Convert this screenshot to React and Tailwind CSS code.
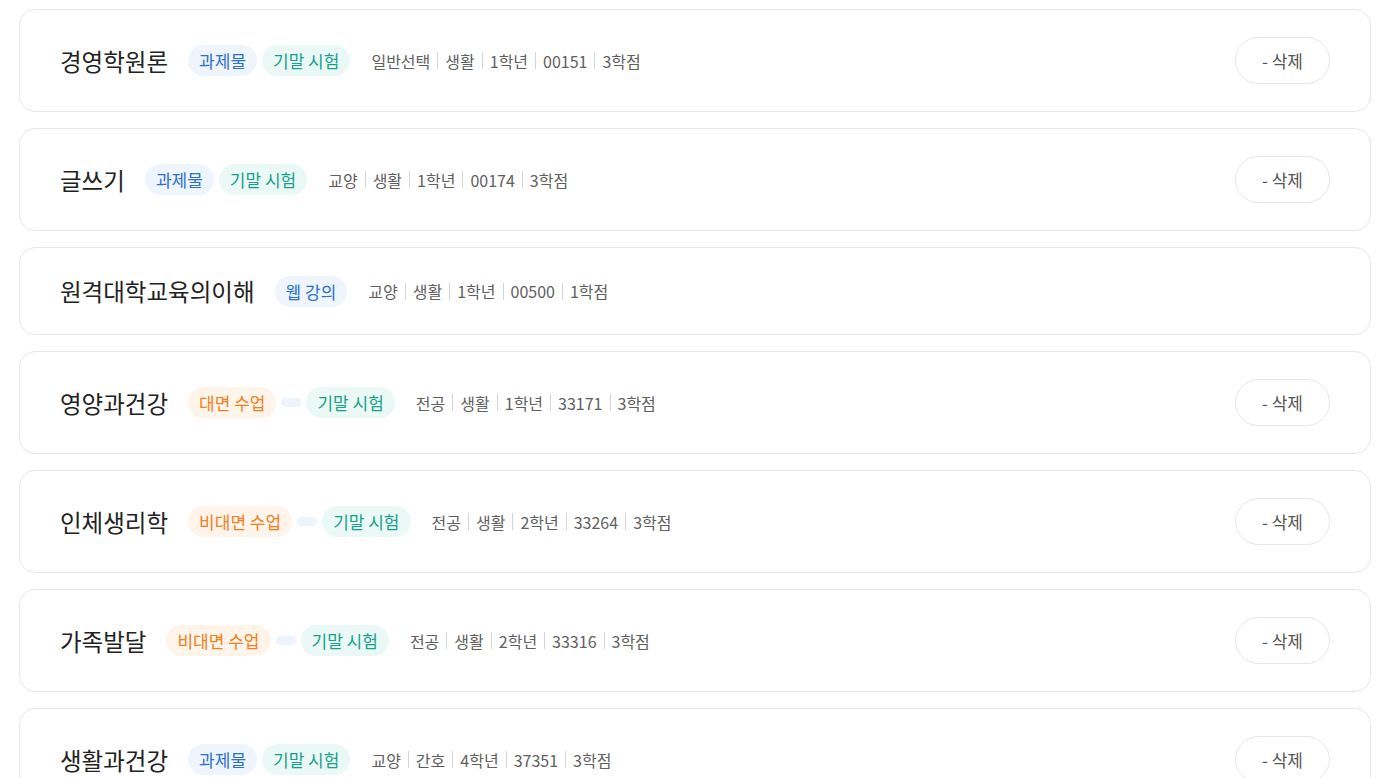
import React from "react";

const TAG_STYLES = {
  blue: "bg-[#eef5fd] text-[#2d6fd2]",
  teal: "bg-[#ebf9f6] text-[#17a08c]",
  orange: "bg-[#fff4ea] text-[#f0801f]",
};

const courses = [
  { title: "경영학원론", tags: [["blue", "과제물"], ["teal", "기말 시험"]], meta: ["일반선택", "생활", "1학년", "00151", "3학점"], del: true },
  { title: "글쓰기", tags: [["blue", "과제물"], ["teal", "기말 시험"]], meta: ["교양", "생활", "1학년", "00174", "3학점"], del: true },
  { title: "원격대학교육의이해", tags: [["blue", "웹 강의"]], meta: ["교양", "생활", "1학년", "00500", "1학점"], del: false },
  { title: "영양과건강", tags: [["orange", "대면 수업"], ["empty"], ["teal", "기말 시험"]], meta: ["전공", "생활", "1학년", "33171", "3학점"], del: true },
  { title: "인체생리학", tags: [["orange", "비대면 수업"], ["empty"], ["teal", "기말 시험"]], meta: ["전공", "생활", "2학년", "33264", "3학점"], del: true },
  { title: "가족발달", tags: [["orange", "비대면 수업"], ["empty"], ["teal", "기말 시험"]], meta: ["전공", "생활", "2학년", "33316", "3학점"], del: true },
  { title: "생활과건강", tags: [["blue", "과제물"], ["teal", "기말 시험"]], meta: ["교양", "간호", "4학년", "37351", "3학점"], del: true },
];

function Tag({ kind, label }) {
  if (kind === "empty") {
    return <span className="w-[20px] h-[9px] rounded-full bg-[#eef4fb]" />;
  }
  return (
    <span className={`h-[31px] px-[11px] rounded-full flex items-center text-[17px] leading-none ${TAG_STYLES[kind]}`}>
      {label}
    </span>
  );
}

function Card({ c }) {
  return (
    <div className="flex items-center justify-between rounded-[16px] border border-[#e7e7e7] bg-white pl-[40px] pr-[40px] py-[27px]">
      <div className="flex items-center">
        <span className="text-[23.5px] text-[#222] leading-[32px]">{c.title}</span>
        <div className="flex items-center gap-[5px] ml-[20px]">
          {c.tags.map((t, i) => (
            <Tag key={i} kind={t[0]} label={t[1]} />
          ))}
        </div>
        <div className="flex items-center ml-[21px] text-[16px] text-[#606060]">
          {c.meta.map((m, i) => (
            <React.Fragment key={i}>
              {i > 0 && <span className="w-px h-[17px] bg-[#d4d4d4] mx-[7px]" />}
              <span>{m}</span>
            </React.Fragment>
          ))}
        </div>
      </div>
      {c.del && (
        <button className="w-[95px] h-[47px] rounded-full border border-[#e6e6e6] bg-white text-[17px] text-[#555] flex items-center justify-center">
          - 삭제
        </button>
      )}
    </div>
  );
}

export default function App() {
  return (
    <div
      className="min-h-screen bg-white pl-[19px] pr-[10px] pt-[9px] pb-[20px] flex flex-col gap-[16px]"
      style={{ fontFamily: '"Noto Sans CJK KR", "Noto Sans", sans-serif' }}
    >
      {courses.map((c, i) => (
        <Card key={i} c={c} />
      ))}
    </div>
  );
}
